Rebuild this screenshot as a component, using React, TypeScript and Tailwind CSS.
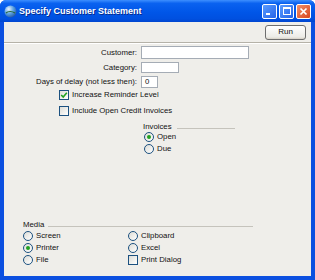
import React from 'react';

function Radio({ checked }: { checked?: boolean }) {
  return (
    <span className="relative w-[10px] h-[10px] rounded-full border border-[#1c5180] bg-[linear-gradient(135deg,#dcdcd6,#ffffff)] shrink-0 flex items-center justify-center">
      {checked && <span className="w-[4px] h-[4px] rounded-full bg-[#21a121]" />}
    </span>
  );
}

function Checkbox({ checked }: { checked?: boolean }) {
  return (
    <span className="w-[10px] h-[10px] border border-[#1c5180] bg-[linear-gradient(135deg,#dcdcd6,#ffffff)] shrink-0 flex items-center justify-center">
      {checked && (
        <svg width="8" height="8" viewBox="0 0 8 8">
          <path d="M1.2 4 L3.2 6 L6.8 1.8" fill="none" stroke="#21a121" strokeWidth="1.6" />
        </svg>
      )}
    </span>
  );
}

function Option({ label, checked, box }: { label: string; checked?: boolean; box?: boolean }) {
  return (
    <div className="flex items-center gap-[3px] h-[11px]">
      {box ? <Checkbox checked={checked} /> : <Radio checked={checked} />}
      <span className="leading-none">{label}</span>
    </div>
  );
}

export default function App() {
  return (
    <div className="w-[315px] h-[280px] flex flex-col bg-[#0b4fe0] rounded-t-[6px] overflow-hidden font-['Liberation_Sans',Arial,sans-serif] text-[7.8px] text-[#111]">
      {/* Title bar */}
      <div className="h-[22px] flex items-center px-[4px] bg-[linear-gradient(to_bottom,#3d8fff_0%,#0a62f0_15%,#0056e8_55%,#0050e0_85%,#0046d0_100%)]">
        <svg width="13" height="13" viewBox="0 0 13 13" className="shrink-0">
          <defs>
            <radialGradient id="g" cx="0.35" cy="0.3" r="0.8">
              <stop offset="0" stopColor="#e8f4ff" />
              <stop offset="0.5" stopColor="#5aa0e0" />
              <stop offset="1" stopColor="#1a4a9a" />
            </radialGradient>
          </defs>
          <circle cx="6.5" cy="6.5" r="6" fill="url(#g)" />
          <path d="M2 8 C4 6, 8 6, 11 8" stroke="#2a6a3a" strokeWidth="1.2" fill="none" />
        </svg>
        <span className="ml-[2px] text-white font-bold text-[9px] leading-none [text-shadow:1px_1px_0_#0a2a8a]">
          Specify Customer Statement
        </span>
        <div className="ml-auto flex gap-[2px]">
          <div className="w-[15px] h-[15px] rounded-[2px] border border-white bg-[linear-gradient(135deg,#5a9cff,#2563e8)] flex items-end justify-start p-[3px]">
            <span className="w-[4px] h-[2px] bg-white" />
          </div>
          <div className="w-[15px] h-[15px] rounded-[2px] border border-white bg-[linear-gradient(135deg,#5a9cff,#2563e8)] flex items-center justify-center">
            <span className="w-[8px] h-[8px] border border-white border-t-2" />
          </div>
          <div className="w-[15px] h-[15px] rounded-[2px] border border-white bg-[linear-gradient(135deg,#f0906a,#d8461e)] flex items-center justify-center">
            <svg width="9" height="9" viewBox="0 0 9 9">
              <path d="M1.5 1.5 L7.5 7.5 M7.5 1.5 L1.5 7.5" stroke="white" strokeWidth="1.7" />
            </svg>
          </div>
        </div>
      </div>

      {/* Body */}
      <div className="flex-1 mx-[4px] mb-[4px] bg-[#efeeea] flex flex-col">
        {/* Toolbar */}
        <div className="h-[20px] flex items-center justify-end pr-[5px]">
          <button className="w-[41px] h-[15px] rounded-[3px] border border-[#6e6e6e] bg-[linear-gradient(to_bottom,#ffffff,#ecebe6_85%,#d6d0c5)] text-[8px] leading-none">
            Run
          </button>
        </div>
        <div className="h-[2px] border-t border-[#b5b2a8] bg-white" />

        {/* Fields */}
        <div className="grid grid-cols-[133px_auto] gap-x-[4px] mt-[2px]">
          <span className="text-right self-center">Customer:</span>
          <div className="w-[108px] h-[13px] bg-white border border-[#a5acb5]" />
          <span className="text-right self-center mt-[3px]">Category:</span>
          <div className="w-[38px] h-[11px] mt-[3px] bg-white border border-[#a5acb5]" />
          <span className="text-right self-center mt-[2px]">Days of delay (not less then):</span>
          <div className="w-[17px] h-[12px] mt-[2px] bg-white border border-[#a5acb5] flex items-center pl-[3px] leading-none">
            0
          </div>
        </div>

        <div className="flex flex-col gap-[5px] ml-[55px] mt-[2px]">
          <Option label="Increase Reminder Level" checked box />
          <Option label="Include Open Credit Invoices" box />
        </div>

        {/* Invoices */}
        <div className="ml-[139px] mt-[6px] w-[92px]">
          <div className="flex items-center gap-[5px] h-[8px]">
            <span className="leading-none">Invoices</span>
            <span className="flex-1 h-[1px] bg-[#c5c3bc] mt-[3px]" />
          </div>
          <div className="flex flex-col gap-[1px] mt-[1px] ml-[1px]">
            <Option label="Open" checked />
            <Option label="Due" />
          </div>
        </div>

        {/* Media */}
        <div className="mt-auto mb-[11px] ml-[19px] w-[230px]">
          <div className="flex items-center gap-[4px] h-[8px]">
            <span className="leading-none">Media</span>
            <span className="flex-1 h-[1px] bg-[#c5c3bc] mt-[3px]" />
          </div>
          <div className="grid grid-cols-[105px_auto] gap-y-[1px] mt-[1px]">
            <Option label="Screen" />
            <Option label="Clipboard" />
            <Option label="Printer" checked />
            <Option label="Excel" />
            <Option label="File" />
            <Option label="Print Dialog" box />
          </div>
        </div>
      </div>
    </div>
  );
}
